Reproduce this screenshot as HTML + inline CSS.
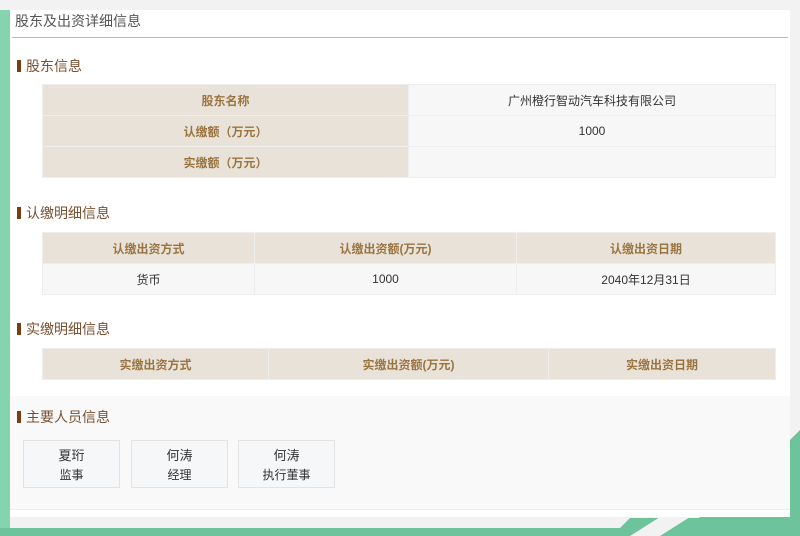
<!DOCTYPE html>
<html><head><meta charset="utf-8"><style>
*{margin:0;padding:0;box-sizing:border-box}
body{width:800px;height:536px;overflow:hidden;background:#f2f2f2;position:relative;font-family:"Liberation Sans","Noto Sans CJK SC",sans-serif}
.abs{position:absolute}
.panel{left:10px;top:10px;width:780px;height:507px;background:#fff}
.title{left:15px;top:11px;font-size:14px;color:#555;line-height:20px}
.line{left:12px;top:37px;width:776px;height:1px;background:#bbb}
.sec{font-size:14px;color:#7a5030;line-height:18px;padding-left:9px}
.sec:before{content:"";position:absolute;left:0;top:3px;width:4px;height:12px;background:#7a3e10}
table{position:absolute;border-collapse:collapse;font-size:12px}
td{border:1px solid #eeeeee;text-align:center;height:31px;color:#333}
td.h{background:#e9e2d8;color:#9a7440;font-weight:bold}
td.v{background:#f7f7f7}
.gray{left:10px;top:396px;width:780px;height:114px;background:#f9f9f9;border-bottom:1px solid #eee}
.card{position:absolute;top:440px;height:48px;width:97px;border:1px solid #e3e3e3;background:#f5f7f9;text-align:center;color:#333}
.card b{display:block;font-weight:normal;font-size:13px;line-height:16px;margin-top:7px}
.card i{display:block;font-style:normal;font-size:12px;line-height:16px;margin-top:3px}
</style></head><body>
<div class="abs" style="left:0;top:10px;width:10px;height:526px;background:#85d4b0"></div>
<svg class="abs" style="left:0;top:0" width="800" height="536"><polygon points="0,528 620,528 630,518 800,518 800,536 0,536" fill="#6cc39c"/><polygon points="790,440 800,430 800,536 680,536 700,517 790,517" fill="#6cc39c"/><polygon points="630,536 660,517 690,517 660,536" fill="#f2f2f2"/></svg>
<div class="abs panel"></div>
<div class="abs title">股东及出资详细信息</div>
<div class="abs line"></div>
<div class="abs sec" style="left:17px;top:57px">股东信息</div>
<table style="left:42px;top:84px;width:734px">
<tr><td class="h" style="width:366px">股东名称</td><td class="v">广州橙行智动汽车科技有限公司</td></tr>
<tr><td class="h">认缴额（万元）</td><td class="v">1000</td></tr>
<tr><td class="h">实缴额（万元）</td><td class="v"></td></tr>
</table>
<div class="abs sec" style="left:17px;top:204px">认缴明细信息</div>
<table style="left:42px;top:232px;width:734px">
<tr><td class="h" style="width:212px">认缴出资方式</td><td class="h" style="width:262px">认缴出资额(万元)</td><td class="h">认缴出资日期</td></tr>
<tr><td class="v">货币</td><td class="v">1000</td><td class="v">2040年12月31日</td></tr>
</table>
<div class="abs sec" style="left:17px;top:320px">实缴明细信息</div>
<table style="left:42px;top:348px;width:734px">
<tr><td class="h" style="width:226px">实缴出资方式</td><td class="h" style="width:280px">实缴出资额(万元)</td><td class="h">实缴出资日期</td></tr>
</table>
<div class="abs gray"></div>
<div class="abs sec" style="left:17px;top:408px">主要人员信息</div>
<div class="card" style="left:23px"><b>夏珩</b><i>监事</i></div>
<div class="card" style="left:131px"><b>何涛</b><i>经理</i></div>
<div class="card" style="left:238px"><b>何涛</b><i>执行董事</i></div>
</body></html>
